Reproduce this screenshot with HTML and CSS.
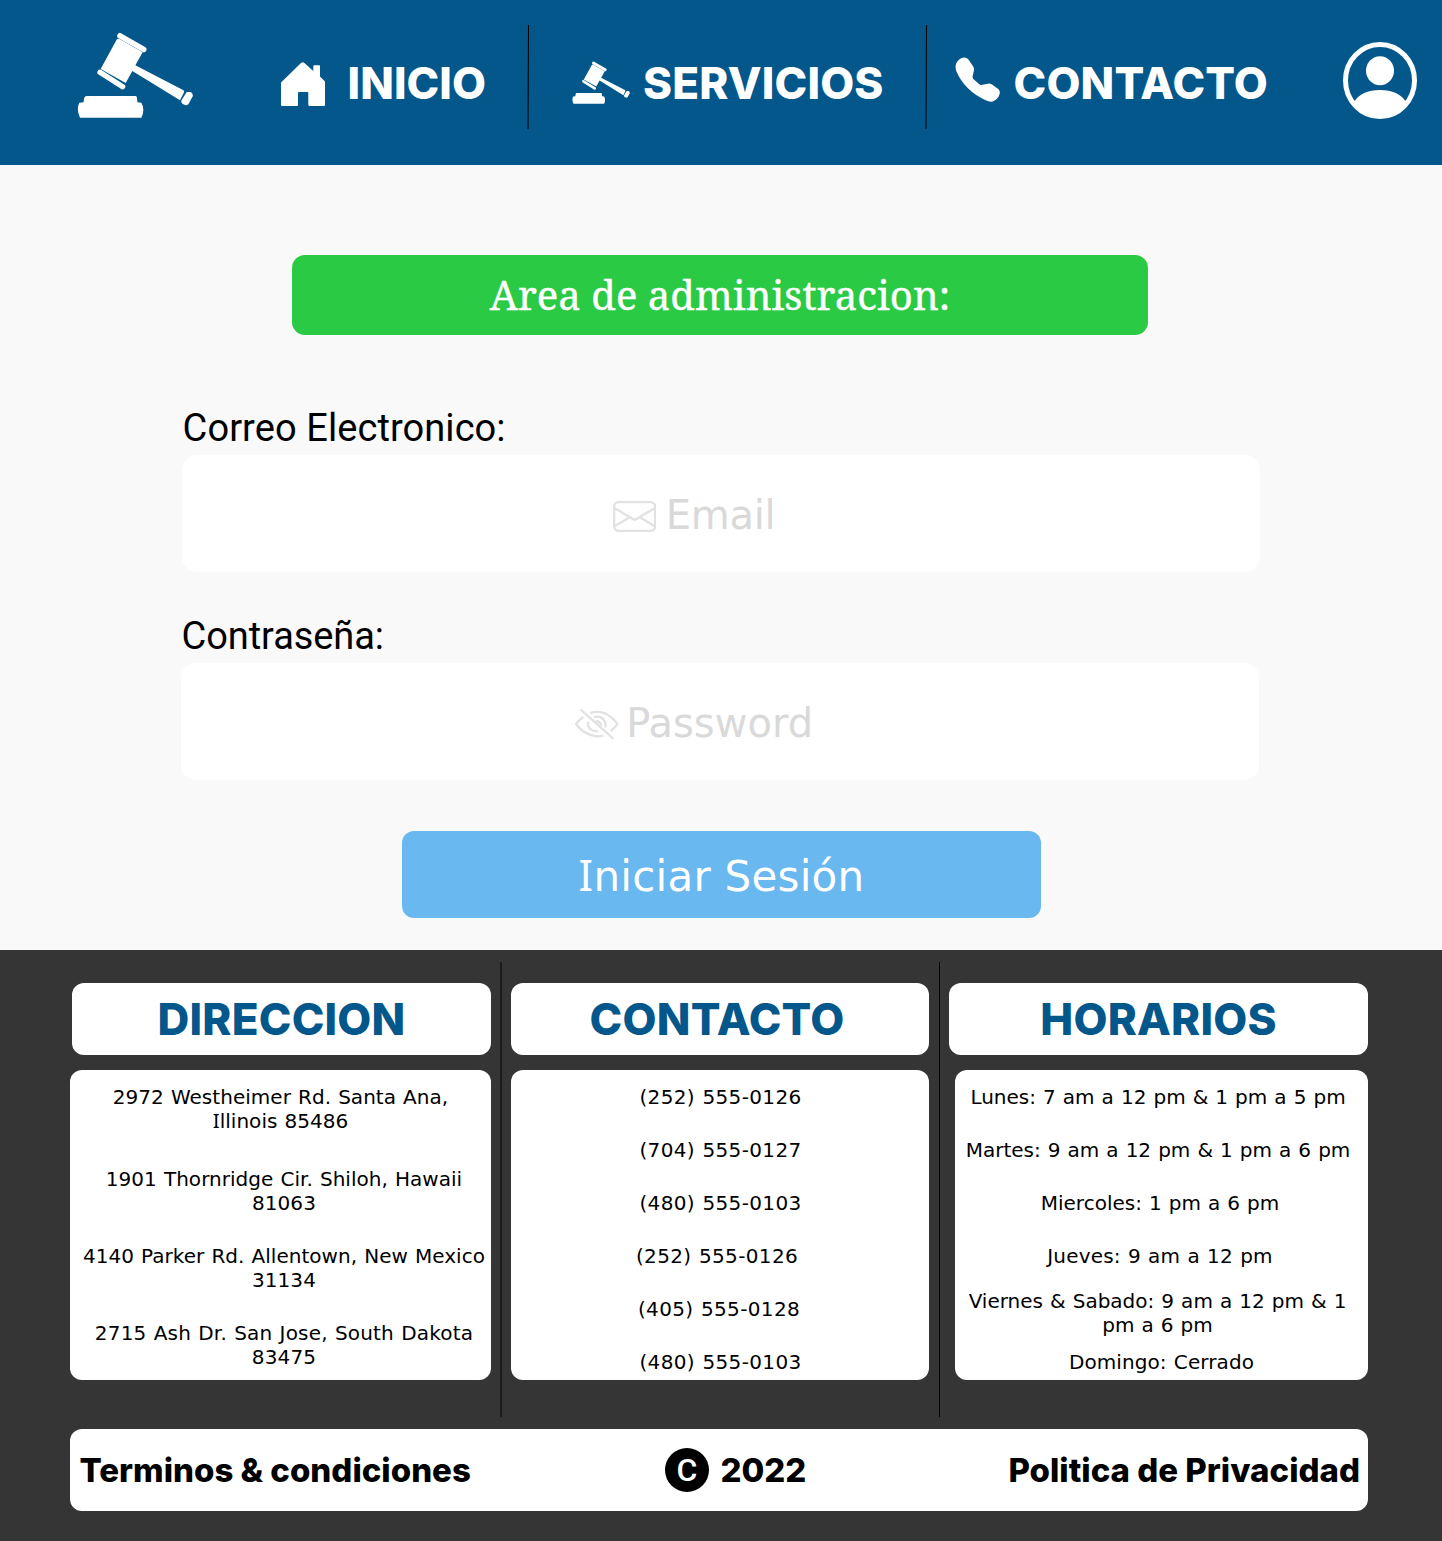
FILE: index.html
```html
<!DOCTYPE html>
<html lang="es">
<head>
<meta charset="utf-8">
<title>Area de administracion</title>
<link rel="stylesheet" href="styles.css">
</head>
<body>
<svg class="sprite" aria-hidden="true">
  <symbol id="gavel" viewBox="50 36 350 260">
    <path d="M179 47.5 250 88" fill="none" stroke="currentColor" stroke-width="17" stroke-linecap="round"/>
    <path d="M119 157 187 200" fill="none" stroke="currentColor" stroke-width="16" stroke-linecap="round"/>
    <path fill="currentColor" d="M170 57Q174 55 179 58L247 97 225 136 368 210Q373 212 371 217L359 241 216 153 196 189 121 147Z"/>
    <path fill="currentColor" d="M379 216 391 216Q399 221 397 229L385 251Q380 257 374 255L366 251Q361 245 364 240Z"/>
    <path fill="currentColor" d="M77 228H227Q231 230 231 247L243 248Q255 268 243 293H59Q47 268 57 248L70 247Q70 230 77 228Z"/>
  </symbol>
</svg>

<header class="header">
  <svg class="logo"><use href="#gavel"/></svg>
  <a class="nav-link nav-home">
    <svg class="icon-home" viewBox="0 0 44 44"><path fill="currentColor" d="M0 20.5 20 1Q21.7-.4 23.4 1L32.3 9V4.3Q32.3 3.3 33.3 3.3H38Q39 3.3 39 4.3V14.5L44 19.5V43Q44 44 43 44H28.5Q27.3 44 27.3 43V31Q27.3 30 26.3 30H18Q17 30 17 31V43Q17 44 16 44H1Q0 44 0 43Z"/></svg>
    <span>INICIO</span>
  </a>
  <svg class="nav-divider" viewBox="0 0 3 104"><path d="M1.5 0 1 104" stroke="#000"/></svg>
  <a class="nav-link nav-services">
    <svg class="icon-gavel"><use href="#gavel"/></svg>
    <span>SERVICIOS</span>
  </a>
  <svg class="nav-divider" viewBox="0 0 3 104"><path d="M1.5 0 1 104" stroke="#000"/></svg>
  <a class="nav-link nav-contact">
    <svg class="icon-phone" viewBox="46 112 136 136"><path fill="currentColor" d="M48 138Q50 124 64 116 78 110 87 120L101 141Q104 146 103 152L99 170Q98 175 101 178L119 194Q122 197 128 195L145 192Q151 191 156 194L176 208Q182 213 180 223 175 240 157 246 148 247 138 242 75 213 50 155 47 147 48 138Z"/></svg>
    <span>CONTACTO</span>
  </a>
  <svg class="user" viewBox="1209 66 222 231">
    <ellipse cx="1320" cy="181.5" rx="103.5" ry="108" fill="none" stroke="currentColor" stroke-width="15"/>
    <ellipse cx="1320" cy="152.5" rx="42" ry="43.5" fill="currentColor"/>
    <path fill="currentColor" d="M1242 246Q1264 210 1320 210T1398 246Q1372 294 1320 294T1242 246Z"/>
  </svg>
</header>

<main class="main">
  <h1 class="title">Area de administracion:</h1>
  <form class="form">
    <div class="field field-email">
      <label class="label">Correo Electronico:</label>
      <div class="input">
        <svg class="icon-mail" viewBox="158 62 130 93" fill="none" stroke="currentColor" stroke-width="7">
          <rect x="161.5" y="65.5" width="123" height="86" rx="13"/>
          <path d="M162 83 218 116Q223 120 228 116L284 83M164 137 211 109M282 137 236 109"/>
        </svg>
        <span class="placeholder placeholder-email">Email</span>
      </div>
    </div>
    <div class="field field-password">
      <label class="label">Contraseña:</label>
      <div class="input">
        <svg class="icon-eye" viewBox="45 687 131 91" fill="none" stroke="currentColor" stroke-width="7">
          <path d="M62 689 160 776M90 699Q113 692 135 700 160 713 172 732 165 744 152 753M70 711Q56 720 48 732 70 764 110 769 122 770 131 767M102 711Q125 706 134 724 138 732 136 743M84 726Q82 744 97 751 104 755 114 753M107 723Q121 724 124 737"/>
        </svg>
        <span class="placeholder">Password</span>
      </div>
    </div>
    <button class="submit" type="button"><span class="serif-i">I</span>niciar Sesión</button>
  </form>
</main>

<footer class="footer">
  <div class="columns">
    <section class="column">
      <h2 class="card-title title-address">DIRECCION</h2>
      <div class="card addresses">
        <p>2972 Westheimer Rd. Santa Ana,<br><span class="serif-i">I</span>llinois 85486</p>
        <p class="shift-right">1901 Thornridge Cir. Shiloh, Hawaii<br>81063</p>
        <p class="shift-right">4140 Parker Rd. Allentown, New Mexico<br>31134</p>
        <p class="shift-right wide">2715 Ash Dr. San Jose, South Dakota<br>83475</p>
      </div>
    </section>
    <div class="divider divider-soft"></div>
    <section class="column">
      <h2 class="card-title title-contact">CONTACTO</h2>
      <div class="card phones">
        <p>(252) 555-0126</p>
        <p>(704) 555-0127</p>
        <p>(480) 555-0103</p>
        <p class="shift-left">(252) 555-0126</p>
        <p class="shift-left-small">(405) 555-0128</p>
        <p>(480) 555-0103</p>
      </div>
    </section>
    <div class="divider"></div>
    <section class="column">
      <h2 class="card-title">HORARIOS</h2>
      <div class="card hours">
        <p class="shift-left">Lunes: 7 am a 12 pm &amp; 1 pm a 5 pm</p>
        <p class="shift-left">Martes: 9 am a 12 pm &amp; 1 pm a 6 pm</p>
        <p class="shift-left-small">Miercoles: 1 pm a 6 pm</p>
        <p class="shift-left-small wide">Jueves: 9 am a 12 pm</p>
        <p class="weekend">Viernes &amp; Sabado: 9 am a 12 pm &amp; 1<br>pm a 6 pm</p>
        <p class="closed">Domingo: Cerrado</p>
      </div>
    </section>
  </div>
  <div class="legal">
    <span>Terminos &amp; condiciones</span>
    <span class="copyright"><span class="copy-mark">C</span>2022</span>
    <span>Politica de Privacidad</span>
  </div>
</footer>
</body>
</html>
```
FILE: styles.css
```css
* { box-sizing: border-box; }
body { margin: 0; background: #f9f9f9; color: #000; font-family: "DejaVu Sans", sans-serif; }
h1, h2, p { margin: 0; }
svg { display: block; flex: none; }
.sprite { display: none; }
/* capital I with slab ends inside the sans text */
.serif-i { font-family: "Noto Sans", sans-serif; font-size: 1.02em; line-height: 1; }

.header { display: flex; align-items: center; height: 165px; background: #03578b; color: #fff; }
.logo { width: 116.7px; height: 86.7px; margin: 0 0 14px 76.6px; }
.nav-link { display: flex; align-items: center; font: 800 44px/54px Inter, sans-serif; letter-spacing: .15px; white-space: nowrap; flex: none; }
.nav-link span { display: block; }
.nav-home { width: 246px; margin-left: 87.7px; gap: 22.6px; letter-spacing: .05px; }
.icon-home { width: 44px; height: 44px; margin-top: 3px; }
.nav-divider { width: 3px; height: 104px; margin-bottom: 11px; }
.nav-services { width: 353px; margin-left: 42.3px; gap: 12.5px; letter-spacing: .2px; }
.icon-gavel { width: 58.2px; height: 43.5px; }
.nav-contact { width: 387.8px; margin-left: 27.2px; gap: 12.8px; }
.icon-phone { width: 45.3px; height: 45.3px; margin-bottom: 5px; }
.user { width: 74px; height: 77px; margin-bottom: 4px; }

.main { height: 785px; padding: 90px 0 0; }
.title { width: 856px; height: 80px; margin-left: 292px; border-radius: 13px; background: #2aca44; color: #fff; font: 400 40px/79px "Noto Serif", serif; letter-spacing: .05px; text-align: center; -webkit-text-stroke: .4px #fff; }
.form { padding-top: 66px; }
.field { width: 1078px; }
.field-email { margin-left: 182px; }
.field-password { margin: 37px 0 0 181px; }
.label { display: block; padding-left: .6px; font: 38px/54px Roboto, sans-serif; letter-spacing: .08px; }
.field-password .label { letter-spacing: -.08px; }
.input { display: flex; align-items: center; height: 117px; border-radius: 15px; background: #fff; color: #e2e2e2; padding-top: 3px; }
.field-email .input { padding-left: 430.5px; gap: 10px; }
.field-password .input { padding-left: 394px; gap: 7.5px; }
.icon-mail { width: 43.3px; height: 31px; margin-top: 2px; }
.icon-eye { width: 43.7px; height: 30.3px; margin-top: 2px; }
.placeholder { font-size: 40px; line-height: 48px; color: #d9d9d9; }
.placeholder-email { letter-spacing: -.3px; }
.submit { display: block; width: 639px; height: 87px; margin: 51px 0 0 402px; padding: 4px 0 0; border: 0; border-radius: 12px; background: #69b8ef; color: #fff; font: 42px "DejaVu Sans", sans-serif; letter-spacing: .25px; }

.footer { height: 591px; padding: 12px 0 0 70px; background: #353535; }
.columns { display: grid; grid-template-columns: 421px 20px 418px 20px 419px; height: 455px; }
.column { padding-top: 21px; }
.divider { width: 1px; margin-left: 10px; background: #000; }
.divider-soft { width: 2px; margin-left: 9px; background: #1b1b1b; }
.card-title { height: 72px; border-radius: 12px; background: #fff; color: #03578b; font: 800 44px/72px Inter, sans-serif; letter-spacing: .2px; text-align: center; }
.title-address { margin-left: 2px; }
.title-contact { padding-right: 6px; }
.card { height: 310px; margin-top: 15px; padding-top: 15px; border-radius: 12px; background: #fff; font-size: 20px; line-height: 24px; text-align: center; white-space: nowrap; word-spacing: .7px; }
.addresses { letter-spacing: .03px; }
.addresses p + p { margin-top: 29px; }
.addresses p:nth-child(2) { margin-top: 34px; }
.phones { letter-spacing: .36px; padding-left: 1px; }
.phones p + p, .hours p + p { margin-top: 29px; }
.hours { margin-left: 6px; }
.hours .weekend { margin-top: 21px; padding-right: 8px; }
.hours .closed { margin-top: 13px; letter-spacing: .1px; }
.shift-right { padding-left: 7px; }
.wide { letter-spacing: .18px; }
.shift-left { padding-right: 7px; }
.shift-left-small { padding-right: 3px; }
.legal { display: flex; align-items: center; justify-content: space-between; width: 1298px; height: 82px; margin-top: 12px; padding: 0 8px 0 9.5px; border-radius: 12px; background: #fff; font: 800 33px/40px Inter, sans-serif; }
.copyright { display: flex; align-items: center; gap: 11.5px; margin-right: 8px; }
.copy-mark { width: 44px; height: 44px; border-radius: 50%; background: #000; color: #fff; font: 500 32px/45px Roboto, sans-serif; text-align: center; }
```
